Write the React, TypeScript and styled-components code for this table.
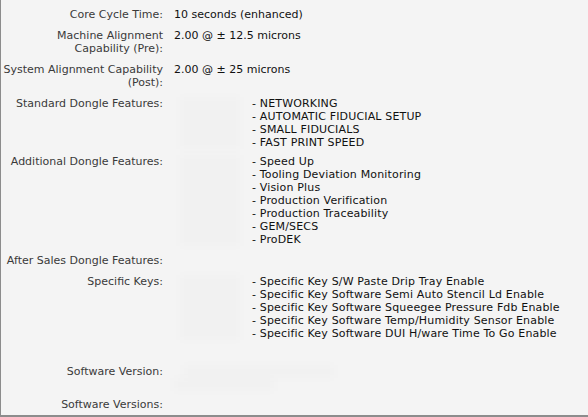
import React from "react";
import styled, { createGlobalStyle } from "styled-components";

const Global = createGlobalStyle`
  html, body { margin: 0; padding: 0; background: #f4f4f4; }
  body { font-family: "DejaVu Sans", Verdana, sans-serif; }
`;

const Panel = styled.div`
  width: 588px;
  height: 417px;
  box-sizing: border-box;
  background: #f4f4f4;
  border-left: 1px solid #8c8c8c;
  border-bottom: 2px solid #8c8c8c;
  padding-top: 4px;
  overflow: hidden;
  font-size: 11px;
  line-height: 13px;
`;

const Row = styled.div<{ $pb?: number }>`
  display: grid;
  grid-template-columns: 162px 1fr;
  column-gap: 11px;
  padding: 4px 0 ${(p) => p.$pb ?? 4}px;
`;

const Label = styled.div`
  text-align: right;
  color: #3a3a3a;
  white-space: nowrap;
`;

const Value = styled.div`
  color: #111;
  white-space: nowrap;
`;

const Split = styled.div`
  display: grid;
  grid-template-columns: 78px 1fr;
`;

const BlurCol = styled.div`
  display: flex;
  flex-direction: column;
`;

const Blur = styled.span<{ $w: number; $ml?: number }>`
  display: block;
  height: 13px;
  width: ${(p) => p.$w}px;
  margin-left: ${(p) => p.$ml ?? 0}px;
  background: rgba(0, 0, 0, 0.012);
  filter: blur(4px);
`;

const List = styled.ul`
  margin: 0;
  padding: 0;
  list-style: none;
`;

const Item = styled.li`
  color: #111;
  white-space: nowrap;
  letter-spacing: 0.16px;
`;

const standard = ["NETWORKING", "AUTOMATIC FIDUCIAL SETUP", "SMALL FIDUCIALS", "FAST PRINT SPEED"];
const additional = [
  "Speed Up",
  "Tooling Deviation Monitoring",
  "Vision Plus",
  "Production Verification",
  "Production Traceability",
  "GEM/SECS",
  "ProDEK",
];
const keys = [
  "Specific Key S/W Paste Drip Tray Enable",
  "Specific Key Software Semi Auto Stencil Ld Enable",
  "Specific Key Software Squeegee Pressure Fdb Enable",
  "Specific Key Software Temp/Humidity Sensor Enable",
  "Specific Key Software DUI H/ware Time To Go Enable",
];

function FeatureList({ items }: { items: string[] }) {
  return (
    <Split>
      <BlurCol>
        {items.map((_, i) => (
          <Blur key={i} $w={60} $ml={6} />
        ))}
      </BlurCol>
      <List>
        {items.map((t) => (
          <Item key={t}>- {t}</Item>
        ))}
      </List>
    </Split>
  );
}

export default function App() {
  return (
    <>
      <Global />
      <Panel>
        <Row>
          <Label>Core Cycle Time:</Label>
          <Value>10 seconds (enhanced)</Value>
        </Row>
        <Row>
          <Label>
            Machine Alignment
            <br />
            Capability (Pre):
          </Label>
          <Value>2.00 @ ± 12.5 microns</Value>
        </Row>
        <Row>
          <Label>
            System Alignment Capability
            <br />
            (Post):
          </Label>
          <Value>2.00 @ ± 25 microns</Value>
        </Row>
        <Row $pb={2}>
          <Label>Standard Dongle Features:</Label>
          <FeatureList items={standard} />
        </Row>
        <Row>
          <Label>Additional Dongle Features:</Label>
          <FeatureList items={additional} />
        </Row>
        <Row>
          <Label>After Sales Dongle Features:</Label>
          <Value />
        </Row>
        <Row $pb={21}>
          <Label>Specific Keys:</Label>
          <FeatureList items={keys} />
        </Row>
        <Row $pb={3}>
          <Label>Software Version:</Label>
          <BlurCol>
            <Blur $w={150} $ml={10} />
            <Blur $w={100} $ml={0} />
          </BlurCol>
        </Row>
        <Row>
          <Label>Software Versions:</Label>
          <Value />
        </Row>
      </Panel>
    </>
  );
}
